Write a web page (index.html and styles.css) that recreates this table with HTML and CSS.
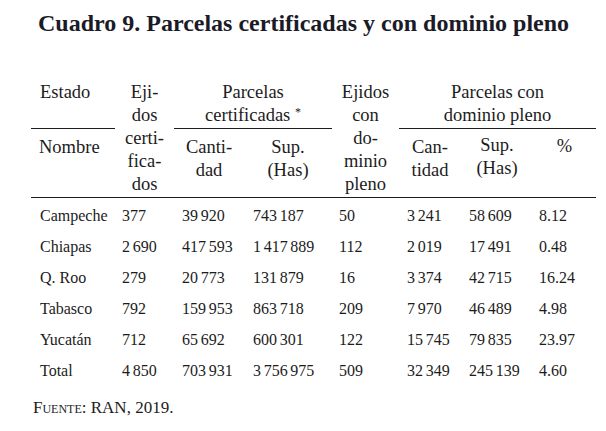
FILE: index.html
```html
<!DOCTYPE html>
<html lang="es">
<head>
<meta charset="utf-8">
<title>Cuadro 9</title>
<link rel="stylesheet" href="styles.css">
</head>
<body>
<h1 class="title">Cuadro 9. Parcelas certificadas y con dominio pleno</h1>
<table class="data">
  <colgroup>
    <col class="c1"><col class="c2"><col class="c3"><col class="c4"><col class="c5"><col class="c6"><col class="c7"><col class="c8">
  </colgroup>
  <thead>
    <tr class="h1row">
      <th class="left ruled">Estado</th>
      <th rowspan="2" class="span">Eji-<br>dos<br>certi-<br>fica-<br>dos</th>
      <th colspan="2" class="ruled">Parcelas<br>certificadas <span class="ast">*</span></th>
      <th rowspan="2" class="span">Ejidos<br>con<br>do-<br>minio<br>pleno</th>
      <th colspan="3" class="ruled">Parcelas con<br>dominio pleno</th>
    </tr>
    <tr class="h2row">
      <th class="left nombre">Nombre</th>
      <th>Canti-<br>dad</th>
      <th>Sup.<br>(Has)</th>
      <th>Can-<br>tidad</th>
      <th class="up">Sup.<br>(Has)</th>
      <th class="pct">%</th>
    </tr>
  </thead>
  <tbody>
    <tr><td>Campeche</td><td>377</td><td>39&#8198;920</td><td>743&#8198;187</td><td>50</td><td>3&#8198;241</td><td>58&#8198;609</td><td>8.12</td></tr>
    <tr><td>Chiapas</td><td>2&#8198;690</td><td>417&#8198;593</td><td>1&#8198;417&#8198;889</td><td>112</td><td>2&#8198;019</td><td>17&#8198;491</td><td>0.48</td></tr>
    <tr><td>Q. Roo</td><td>279</td><td>20&#8198;773</td><td>131&#8198;879</td><td>16</td><td>3&#8198;374</td><td>42&#8198;715</td><td>16.24</td></tr>
    <tr><td>Tabasco</td><td>792</td><td>159&#8198;953</td><td>863&#8198;718</td><td>209</td><td>7&#8198;970</td><td>46&#8198;489</td><td>4.98</td></tr>
    <tr><td>Yucatán</td><td>712</td><td>65&#8198;692</td><td>600&#8198;301</td><td>122</td><td>15&#8198;745</td><td>79&#8198;835</td><td>23.97</td></tr>
    <tr><td>Total</td><td>4&#8198;850</td><td>703&#8198;931</td><td>3&#8198;756&#8198;975</td><td>509</td><td>32&#8198;349</td><td>245&#8198;139</td><td>4.60</td></tr>
  </tbody>
</table>
<p class="source"><span class="sc">Fuente</span>: RAN, 2019.</p>
</body>
</html>
```

FILE: styles.css
```css
html, body {
  margin: 0;
  padding: 0;
  background: #ffffff;
}
body {
  font-family: "Liberation Serif", "Times New Roman", serif;
  color: #1c1c1c;
}
.title {
  margin: 8px 0 0 38px;
  font-size: 24px;
  line-height: 30px;
  font-weight: bold;
  color: #1b1b28;
  white-space: nowrap;
}
.data {
  margin: 42px 0 0 31px;
  border-collapse: separate;
  border-spacing: 0;
  table-layout: fixed;
  width: 565px;
  font-size: 18.5px;
}
.c1 { width: 84px; }
.c2 { width: 59px; }
.c3 { width: 70px; }
.c4 { width: 88px; }
.c5 { width: 67px; }
.c6 { width: 62px; }
.c7 { width: 72px; }
.c8 { width: 63px; }
th {
  font-weight: normal;
  line-height: 23px;
  text-align: center;
  vertical-align: top;
  padding: 0;
  white-space: nowrap;
}
th.left {
  text-align: left;
  padding-left: 9px;
}
th.nombre { padding-left: 8px; }
.h1row th {
  padding-top: 1px;
  padding-bottom: 1px;
}
.h1row th.ruled {
  border-bottom: 1px solid #1c1c1c;
}
.h1row th.span {
  padding-bottom: 0;
  border-bottom: 1px solid #1c1c1c;
}
.h2row th {
  padding-top: 7px;
  padding-bottom: 15px;
  border-bottom: 1px solid #1c1c1c;
}
.h2row th.up { padding-top: 5px; padding-bottom: 17px; }
.h2row th.pct { padding-top: 6px; padding-bottom: 16px; }
.ast {
  font-size: 12px;
  vertical-align: 5px;
  line-height: 0;
}
td {
  line-height: 31px;
  padding: 0;
  vertical-align: baseline;
  font-size: 16px;
  white-space: nowrap;
}
td:first-child { padding-left: 9px; }
td:nth-child(2) { padding-left: 7px; }
td:nth-child(3) { padding-left: 8px; }
td:nth-child(4) { padding-left: 9px; }
td:nth-child(5) { padding-left: 7px; }
td:nth-child(6) { padding-left: 8px; }
td:nth-child(7) { padding-left: 8px; }
td:nth-child(8) { padding-left: 6px; }
tbody tr:first-child td { padding-top: 2px; }
.source {
  margin: 10px 0 0 33px;
  font-size: 17px;
  line-height: 23px;
}
.sc {
  font-variant: small-caps;
}
```
